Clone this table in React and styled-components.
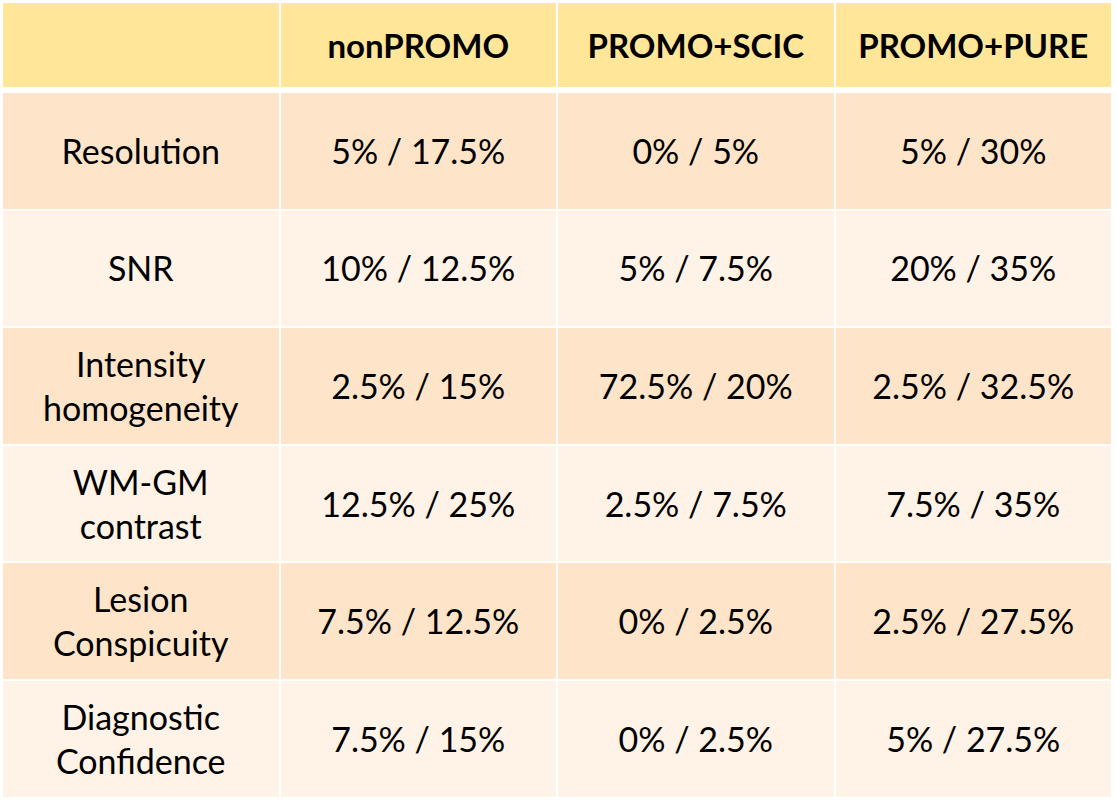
import React from "react";
import styled, { createGlobalStyle } from "styled-components";

const Global = createGlobalStyle`
  html, body { margin: 0; padding: 0; background: #ffffff; }
  body { font-family: Lato, "Liberation Sans", sans-serif; }
`;

const Page = styled.div`
  padding: 3px 6px 12px 3px;
  width: 1108px;
`;

const Table = styled.div`
  display: grid;
  grid-template-columns: repeat(4, 1fr);
  column-gap: 2px;
  background: #ffffff;
`;

const HeaderRow = styled.div`
  display: contents;
`;

const HeadCell = styled.div`
  height: 84px;
  margin-bottom: 6px;
  background: #ffe699;
  display: flex;
  align-items: center;
  justify-content: center;
  font-size: 33px;
  font-weight: 700;
  color: #000;
`;

const Cell = styled.div`
  height: 115.6px;
  margin-bottom: ${(p) => (p.$last ? "0" : "2px")};
  background: ${(p) => (p.$odd ? "#fee5ca" : "#fff2e6")};
  display: flex;
  align-items: center;
  justify-content: center;
  text-align: center;
  font-size: 34px;
  line-height: 44px;
  color: #000;
`;

const headers = ["", "nonPROMO", "PROMO+SCIC", "PROMO+PURE"];
const rows = [
  [["Resolution"], "5% / 17.5%", "0% / 5%", "5% / 30%"],
  [["SNR"], "10% / 12.5%", "5% / 7.5%", "20% / 35%"],
  [["Intensity", "homogeneity"], "2.5% / 15%", "72.5% / 20%", "2.5% / 32.5%"],
  [["WM-GM", "contrast"], "12.5% / 25%", "2.5% / 7.5%", "7.5% / 35%"],
  [["Lesion", "Conspicuity"], "7.5% / 12.5%", "0% / 2.5%", "2.5% / 27.5%"],
  [["Diagnostic", "Confidence"], "7.5% / 15%", "0% / 2.5%", "5% / 27.5%"],
];

export default function App() {
  return (
    <Page>
      <Global />
      <Table>
        <HeaderRow>
          {headers.map((h, i) => (
            <HeadCell key={i}>{h}</HeadCell>
          ))}
        </HeaderRow>
        {rows.map((r, ri) => (
          <React.Fragment key={ri}>
            <Cell $odd={ri % 2 === 0} $last={ri === rows.length - 1}>
              <div>
                {r[0].map((l, li) => (
                  <div key={li}>{l}</div>
                ))}
              </div>
            </Cell>
            {r.slice(1).map((v, vi) => (
              <Cell key={vi} $odd={ri % 2 === 0} $last={ri === rows.length - 1}>
                {v}
              </Cell>
            ))}
          </React.Fragment>
        ))}
      </Table>
    </Page>
  );
}
